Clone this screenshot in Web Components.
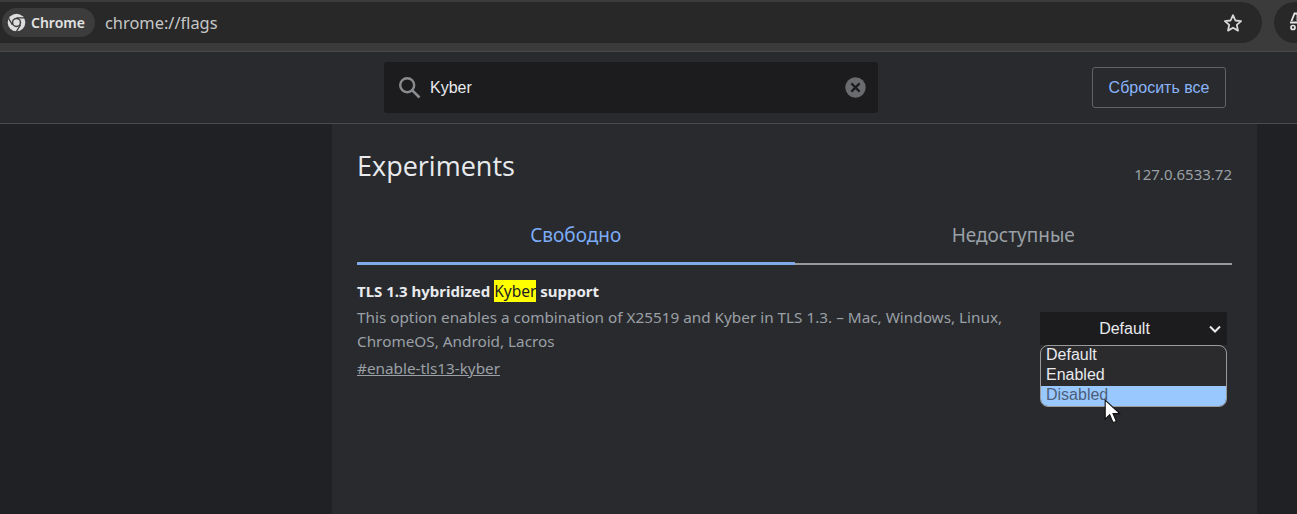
<!DOCTYPE html>
<html>
<head>
<meta charset="utf-8">
<style>
  html, body { margin: 0; height: 100%; overflow: hidden; background: #202124; }
  body { display: flex; flex-direction: column; font-family: "Noto Sans", "Open Sans", sans-serif; }
</style>
</head>
<body>
<browser-bar url="chrome://flags"></browser-bar>
<flags-header></flags-header>
<flags-page>
  <flag-tabs slot="tabs"></flag-tabs>
  <flag-item></flag-item>
</flags-page>

<script>
class BrowserBar extends HTMLElement {
  constructor() {
    super();
    const root = this.attachShadow({ mode: "open" });
    root.innerHTML = `
      <style>
        :host { display: flex; align-items: flex-start; height: 52px; box-sizing: border-box; background: #3b3b3b; border-bottom: 1px solid #4a4a4c; padding-top: 2px; }
        .omni { flex: 1; height: 41px; display: flex; align-items: center; background: #282828; border-radius: 0 21px 21px 0; padding-left: 2px; }
        .chip { display: flex; align-items: center; gap: 5px; height: 29px; background: #3c3c3c; border-radius: 15px; padding: 0 10px 0 5px; color: #e3e3e3; font: 600 14px "Noto Sans", sans-serif; box-sizing: border-box; width: 93px; }
        .url { margin-left: 10px; flex: 1; color: #c7c7c7; font: 16.4px "Noto Sans", sans-serif; }
        .star { margin-right: 19px; display: block; }
        .ext { margin-left: 12px; width: 23px; height: 41px; background: #282828; border-radius: 21px 0 0 21px; overflow: hidden; }
        .ext svg { display: block; margin: 9px 0 0 16px; }
      </style>
      <div class="omni">
        <span class="chip">
          <svg width="19" height="19" viewBox="0 0 19 19">
            <circle cx="9.5" cy="9.5" r="8.8" fill="#dedede"/>
            <circle cx="9.5" cy="9.5" r="4.7" fill="#3c3c3c"/>
            <circle cx="9.5" cy="9.5" r="3.2" fill="#dedede"/>
            <path d="M9.5 4.8H18M5.4 11.9 1.2 4.6M13.6 11.9 9.3 18.6" stroke="#3c3c3c" stroke-width="1.2"/>
          </svg>
          Chrome
        </span>
        <span class="url">${this.getAttribute("url")}</span>
        <svg class="star" width="20" height="20" viewBox="0 0 20 20"><path d="M10 2.2l2.4 5.3 5.7.6-4.3 3.8 1.2 5.7L10 14.7l-5 2.9 1.2-5.7L1.9 8.1l5.7-.6z" fill="none" stroke="#d8d8d8" stroke-width="1.8" stroke-linejoin="round"/></svg>
      </div>
      <div class="ext">
        <svg width="16" height="20" viewBox="0 0 16 20"><path d="M1.5 10 4.5 2.5h3V10M0 11.5h16" stroke="#e4e4e4" stroke-width="1.8" fill="none"/><circle cx="3" cy="16.5" r="2" fill="none" stroke="#e4e4e4" stroke-width="1.7"/></svg>
      </div>`;
  }
}

class FlagsHeader extends HTMLElement {
  constructor() {
    super();
    const root = this.attachShadow({ mode: "open" });
    root.innerHTML = `
      <style>
        :host { display: flex; height: 72px; box-sizing: border-box; background: #292a2d; border-bottom: 1px solid #4a4b4e; padding: 10px 71px 0 384px; align-items: flex-start; }
        .search { width: 494px; height: 51px; box-sizing: border-box; background: #1c1c1e; border-radius: 3px; display: flex; align-items: center; padding: 0 12px 0 14px; }
        .text { flex: 1; margin-left: 9px; color: #e8eaed; font: 16px "Liberation Sans", Arial, sans-serif; }
        .reset { margin-left: auto; margin-top: 5px; width: 134px; height: 41px; box-sizing: border-box; border: 1px solid #5f6368; border-radius: 3px; color: #8ab4f8; font: 16px "Liberation Sans", Arial, sans-serif; display: flex; align-items: center; justify-content: center; }
      </style>
      <div class="search">
        <svg width="23" height="23" viewBox="0 0 23 23"><circle cx="9.2" cy="9.2" r="7" fill="none" stroke="#8b8c8f" stroke-width="2.4"/><path d="M14.3 14.3l7.2 7.2" stroke="#8b8c8f" stroke-width="2.6"/></svg>
        <span class="text">Kyber</span>
        <svg width="21" height="21" viewBox="0 0 21 21"><circle cx="10.5" cy="10.5" r="10.2" fill="#6a6b6e"/><path d="M6.4 6.4l8.2 8.2M14.6 6.4l-8.2 8.2" stroke="#1c1c1e" stroke-width="2.2"/></svg>
      </div>
      <div class="reset">Сбросить все</div>`;
  }
}

class FlagsPage extends HTMLElement {
  constructor() {
    super();
    const root = this.attachShadow({ mode: "open" });
    root.innerHTML = `
      <style>
        :host { display: block; flex: 1; box-sizing: border-box; width: 925px; margin-left: 332px; background: #292a2d; padding: 0 25px; }
        .top { display: flex; justify-content: space-between; align-items: flex-start; height: 90px; }
        h1 { margin: 22px 0 0; color: #e8eaed; font: 400 27px "Open Sans", "Noto Sans", sans-serif; line-height: 40px; }
        .ver { margin-top: 39px; color: #9aa0a6; font: 15px "Noto Sans", sans-serif; line-height: 22px; }
      </style>
      <div class="top"><h1>Experiments</h1><span class="ver">127.0.6533.72</span></div>
      <slot name="tabs"></slot>
      <slot></slot>`;
  }
}

class FlagTabs extends HTMLElement {
  constructor() {
    super();
    const root = this.attachShadow({ mode: "open" });
    root.innerHTML = `
      <style>
        :host { display: flex; font: 19px "Noto Sans", sans-serif; }
        .tab { flex: 1; height: 51px; box-sizing: border-box; display: flex; align-items: center; justify-content: center; padding-bottom: 8px; color: #9aa0a6; border-bottom: 2px solid #9a9a9a; }
        .on { color: #7cacf8; border-bottom: 3px solid #7fa9e8; padding-bottom: 6px; }
      </style>
      <div class="tab on">Свободно</div>
      <div class="tab">Недоступные</div>`;
  }
}

class FlagItem extends HTMLElement {
  constructor() {
    super();
    const root = this.attachShadow({ mode: "open" });
    root.innerHTML = `
      <style>
        :host { display: flex; justify-content: space-between; padding-top: 14px; }
        .info { width: 660px; }
        .name { color: #e8eaed; font: 700 15px "Noto Sans", sans-serif; line-height: 24px; margin-bottom: 2px; }
        mark { background: #ffff00; color: #202124; font-weight: 400; font-size: 15.5px; }
        .desc { color: #9aa0a6; font: 15.3px "Noto Sans", sans-serif; line-height: 24px; }
        a { display: inline-block; margin-top: 3px; color: #9aa0a6; text-decoration: underline; font: 15.3px "Noto Sans", sans-serif; line-height: 24px; }
        .select { width: 187px; margin-right: 5px; margin-top: 33px; height: 33px; padding-right: 18px; background: #1c1c1e; color: #e8eaed; font: 16px "Liberation Sans", Arial, sans-serif; display: flex; align-items: center; justify-content: center; position: relative; box-sizing: border-box; }
        .chev { position: absolute; right: 5px; top: 12px; }
        .popup { position: absolute; left: 0; top: 33px; width: 187px; height: 62px; box-sizing: border-box; background: #2b2b2e; border: 1px solid #9a9a9a; border-radius: 8px; overflow: hidden; font: 16px/18px "Liberation Sans", Arial, sans-serif; color: #e8eaed; }
        .opt { height: 20px; padding-left: 5px; }
        .hover { background: #99c8ff; color: #4d5f78; }
        .cursor { position: absolute; left: 64px; top: 87px; }
      </style>
      <div class="info">
        <div class="name">TLS 1.3 hybridized <mark>Kyber</mark> support</div>
        <div class="desc">This option enables a combination of X25519 and Kyber in TLS 1.3. – Mac, Windows, Linux, ChromeOS, Android, Lacros</div>
        <a>#enable-tls13-kyber</a>
      </div>
      <div class="select">
        Default
        <svg class="chev" width="14" height="10" viewBox="0 0 14 10"><path d="M2 2.5l5 5 5-5" fill="none" stroke="#e8eaed" stroke-width="2"/></svg>
        <div class="popup">
          <div class="opt">Default</div>
          <div class="opt">Enabled</div>
          <div class="opt hover">Disabled</div>
        </div>
        <svg class="cursor" width="17" height="27" viewBox="0 0 15 24"><path d="M1 1v17l4-4 3 7 3-1-3-7h6z" fill="#fff" stroke="#111" stroke-width="1"/></svg>
      </div>`;
  }
}

customElements.define("browser-bar", BrowserBar);
customElements.define("flags-header", FlagsHeader);
customElements.define("flags-page", FlagsPage);
customElements.define("flag-tabs", FlagTabs);
customElements.define("flag-item", FlagItem);
</script>
</body>
</html>
